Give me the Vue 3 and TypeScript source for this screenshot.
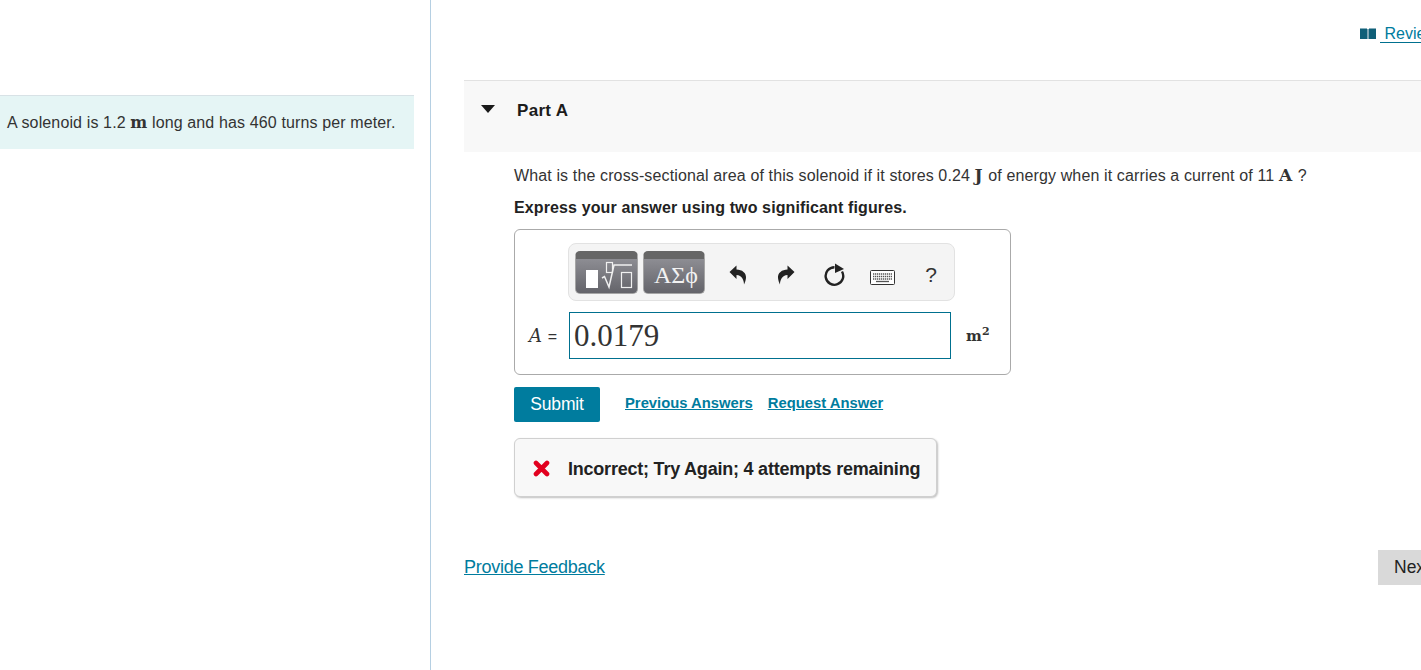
<script setup lang="ts">
const tools = ['undo', 'redo', 'reset', 'keyboard', 'help']
</script>

<template>
  <div class="page">
    <aside class="left-pane">
      <div class="intro">
        A solenoid is 1.2 <span class="math">m</span> long and has 460 turns per meter.
      </div>
    </aside>
    <main class="right-pane">
      <div class="review-row">
        <a class="review-link">
          <svg class="book" width="16" height="11" viewBox="0 0 16 11">
            <path d="M0 0.500h7v10.500h-7zM9 0.500h7v10.500h-7z" fill="#0f5f78" />
            <path d="M7 1h2v10h-2z" fill="#7fa8b6" />
          </svg>
          <span class="review-text">&nbsp;Review</span>
        </a>
      </div>
      <div class="part-head">
        <svg class="caret" width="14" height="8" viewBox="0 0 14 8"><path d="M0 0h14L7 8z" fill="#1a1a1a" /></svg>
        <h2>Part A</h2>
      </div>
      <section class="part-body">
        <p class="question">
          What is the cross-sectional area of this solenoid if it stores 0.24 <span class="math bold">J</span> of energy when it carries a current of 11 <span class="math bold">A</span> ?
        </p>
        <p class="hint">Express your answer using two significant figures.</p>
        <div class="answer-box">
          <div class="toolbar">
            <button class="tpl tpl-math" type="button">
              <svg class="tpl-icon" width="61" height="34" viewBox="0 0 61 34" fill="none" stroke="#f0f0f0" stroke-width="1.200">
                <rect x="10" y="11" width="12" height="18" fill="#fff" stroke="none" />
                <rect x="30.500" y="3.500" width="6" height="10" />
                <path d="M26 19l2.500-1.500 4.500 10.500 5-22h18" stroke-width="1.500" />
                <rect x="45.500" y="13.500" width="10" height="15" />
              </svg>
            </button>
            <button class="tpl tpl-greek" type="button">ΑΣϕ</button>
            <div class="tools">
              <span v-for="t in tools" :key="t" class="tool" :class="t">
                <svg v-if="t === 'undo'" width="18" height="20" viewBox="0 0 18 20">
                  <path d="M0.500 7L7.500 0.500V4.500C13 4.500 17.500 8 17 13 16.700 15.500 16 17.500 15 19.500 15 15 13 10.500 7.500 10V14z" fill="#222" />
                </svg>
                <svg v-else-if="t === 'redo'" width="18" height="20" viewBox="0 0 18 20">
                  <path d="M17.500 7L10.500 0.500V4.500C5 4.500 0.500 8 1 13 1.300 15.500 2 17.500 3 19.500 3 15 5 10.500 10.500 10V14z" fill="#222" />
                </svg>
                <svg v-else-if="t === 'reset'" width="22" height="24" viewBox="0 0 22 24" fill="none">
                  <path d="M10.500 4.200A8.800 8.800 0 1 0 18 8.500" stroke="#222" stroke-width="2.400" />
                  <path d="M11 0.500L20 6 11 10z" fill="#222" />
                </svg>
                <svg v-else-if="t === 'keyboard'" width="25" height="15" viewBox="0 0 25 15" fill="none">
                  <rect x="0.500" y="0.500" width="24" height="14" rx="1" stroke="#333" fill="#fff" />
                  <path d="M3 4h19M3 6.500h19M3 9h19" stroke="#555" stroke-width="1.300" stroke-dasharray="1.300 .7" />
                  <path d="M6 11.500h13" stroke="#555" stroke-width="1.300" />
                </svg>
                <span v-else class="help">?</span>
              </span>
            </div>
          </div>
          <div class="input-row">
            <span class="label"><i>A</i> <span class="eq">=</span></span>
            <div class="answer-input">0.0179</div>
            <span class="unit">m<sup>2</sup></span>
          </div>
        </div>
        <div class="actions">
          <button class="submit" type="button">Submit</button>
          <a class="action-link first">Previous Answers</a>
          <a class="action-link">Request Answer</a>
        </div>
        <div class="feedback">
          <svg class="cross" width="17" height="17" viewBox="0 0 17 17">
            <path d="M3 3l11 11M14 3L3 14" stroke="#e2001f" stroke-width="4.600" stroke-linecap="round" />
          </svg>
          <span class="feedback-text">Incorrect; Try Again; 4 attempts remaining</span>
        </div>
      </section>
      <div class="footer-row">
        <a class="provide">Provide Feedback</a>
        <button class="next" type="button">Next</button>
      </div>
    </main>
  </div>
</template>

<style>
html, body { margin: 0; overflow: hidden; background: #fff; }
</style>

<style scoped>
.page {
  display: flex;
  width: 1421px;
  height: 670px;
  overflow: hidden;
  font-family: "Liberation Sans", Arial, sans-serif;
  color: #222;
}
.left-pane {
  flex: 0 0 431px;
  box-sizing: border-box;
  border-right: 1px solid #b5cfe2;
  padding-top: 95px;
}
.intro {
  width: 414px;
  height: 54px;
  box-sizing: border-box;
  padding: 17px 0 0 7px;
  background: #e5f5f5;
  border-top: 1px solid #d8e2e6;
  font-size: 16px;
  line-height: 20px;
  color: #333;
  letter-spacing: 0.13px;
}
.math { font-family: "DejaVu Serif", "Liberation Serif", serif; font-size: 15px; line-height: 0; }
.math.bold { font-weight: 700; font-size: 17px; color: #333; letter-spacing: 1px; }
.intro .math { font-weight: 700; font-size: 16px; }
.right-pane {
  flex: 0 0 1000px;
  margin-left: 33px;
  display: flex;
  flex-direction: column;
}
.review-row {
  height: 81px;
  box-sizing: border-box;
  padding: 25px 30px 0 0;
  display: flex;
  justify-content: flex-end;
  border-bottom: 1px solid #e2e2e2;
}
.review-link {
  display: flex;
  align-items: flex-start;
  height: 18px;
  font-size: 16px;
  line-height: 18px;
  color: #007c9e;
}
.book { margin-top: 3px; margin-right: 4px; }
.review-text { border-bottom: 1px solid #00708f; height: 17px; width: 54px; overflow: hidden; white-space: nowrap; }
.part-head {
  display: flex;
  align-items: flex-start;
  height: 71px;
  background: #f8f8f8;
  box-sizing: border-box;
  padding: 19px 0 0 17px;
}
.caret { margin-top: 5px; }
.part-head h2 {
  margin: 1px 0 0 22px;
  font-size: 17px;
  line-height: 20px;
  font-weight: 700;
  color: #1c1c1c;
  letter-spacing: 0.3px;
}
.part-body { padding-left: 50px; }
.question {
  margin: 14px 0 0;
  font-size: 16px;
  line-height: 20px;
  color: #333;
  letter-spacing: 0.13px;
}
.hint {
  margin: 12px 0 0;
  font-size: 16px;
  line-height: 20px;
  font-weight: 700;
  color: #222;
  letter-spacing: 0.12px;
}
.answer-box {
  width: 497px;
  height: 146px;
  box-sizing: border-box;
  margin-top: 11px;
  border: 1px solid #aaa;
  border-radius: 6px;
  padding: 13px 0 0 14px;
}
.toolbar {
  display: flex;
  align-items: center;
  gap: 5px;
  width: 387px;
  height: 58px;
  box-sizing: border-box;
  margin-left: 39px;
  padding-left: 6px;
  background: #f4f4f4;
  border: 1px solid #e2e2e2;
  border-radius: 8px;
}
.tpl {
  height: 43px;
  box-sizing: border-box;
  padding: 0;
  border: 1px solid #a5a5a5;
  border-top: 8px solid #666;
  border-radius: 5px;
  background: linear-gradient(#8d8d93, #64646a);
  color: #f2f2f2;
  display: flex;
  align-items: center;
}
.tpl-math { width: 63px; }
.tpl-icon { display: block; }
.tpl-greek {
  width: 62px;
  justify-content: center;
  font-family: "Liberation Serif", serif;
  font-size: 24px;
  padding-left: 4px;
}
.tools { display: flex; align-items: center; margin-top: 6px; }
.tool { display: flex; justify-content: center; align-items: center; height: 26px; }
.tool.undo { margin-left: 19px; width: 18px; }
.tool.redo { margin-left: 30px; width: 18px; }
.tool.reset { margin-left: 29px; width: 22px; }
.tool.keyboard { margin-left: 24px; width: 25px; margin-top: 5px; }
.tool.help { margin-left: 30px; width: 12px; }
.help { font-size: 21px; color: #333; line-height: 24px; }
.input-row {
  display: flex;
  align-items: center;
  margin-top: 11px;
}
.label {
  width: 40px;
  font-family: "DejaVu Serif", "Liberation Serif", serif;
  font-size: 18px;
  color: #333;
  white-space: nowrap;
}
.eq { font-family: "Liberation Sans", sans-serif; font-size: 16px; }
.answer-input {
  width: 382px;
  height: 47px;
  box-sizing: border-box;
  border: 1px solid #00708f;
  padding-left: 4px;
  font-family: "Liberation Serif", serif;
  font-size: 31px;
  line-height: 45px;
  color: #333;
}
.unit {
  margin-left: 15px;
  font-family: "DejaVu Serif", "Liberation Serif", serif;
  font-weight: 700;
  font-size: 15px;
  color: #333;
}
.unit sup { font-size: 11px; line-height: 0; }
.actions { display: flex; align-items: center; margin-top: 12px; }
.submit {
  width: 86px;
  height: 35px;
  border: 0;
  border-radius: 2px;
  background: #007c9e;
  color: #fff;
  font: 17.500px/20px "Liberation Sans", sans-serif;
  letter-spacing: -0.2px;
  padding: 0 0 2px;
}
.action-link {
  margin: -4px 0 0 15px;
  font-size: 14.800px;
  font-weight: 700;
  color: #007c9e;
  text-decoration: underline;
}
.action-link.first { margin-left: 25px; }
.feedback {
  display: flex;
  align-items: center;
  width: 423px;
  height: 59px;
  box-sizing: border-box;
  margin-top: 16px;
  padding-left: 18px;
  background: #f8f8f8;
  border: 1px solid #d0d0d0;
  border-radius: 6px;
  box-shadow: 1px 1px 2px rgba(0, 0, 0, 0.25);
  font-size: 18px;
  font-weight: 700;
  color: #222;
  letter-spacing: -0.22px;
  white-space: nowrap;
}
.cross { margin-right: 18px; margin-top: 1px; }
.feedback-text { margin-top: 3px; }
.footer-row {
  display: flex;
  justify-content: space-between;
  align-items: center;
  margin-top: 53px;
}
.provide {
  font-size: 18px;
  color: #007c9e;
  text-decoration: underline;
  letter-spacing: -0.27px;
}
.next {
  width: 86px;
  height: 35px;
  border: 0;
  background: #d9d9d9;
  color: #222;
  font: 17.500px "Liberation Sans", sans-serif;
  padding: 0 0 0 16px;
  text-align: left;
}
</style>
